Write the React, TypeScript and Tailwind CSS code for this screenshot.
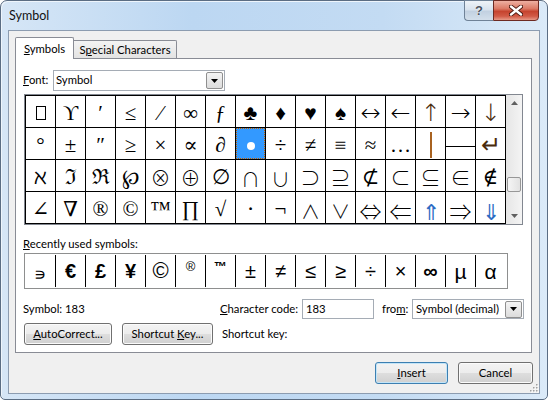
import React from 'react';

const rows: string[][] = [
  ['□', 'ϒ', '′', '≤', '⁄', '∞', 'ƒ', '♣', '♦', '♥', '♠', '↔', '←', '↑', '→', '↓'],
  ['°', '±', '″', '≥', '×', '∝', '∂', '•', '÷', '≠', '≡', '≈', '…', '|', '—', '↵'],
  ['ℵ', 'ℑ', 'ℜ', '℘', '⊗', '⊕', '∅', '∩', '∪', '⊃', '⊇', '⊄', '⊂', '⊆', '∈', '∉'],
  ['∠', '∇', '®', '©', '™', '∏', '√', '⋅', '¬', '∧', '∨', '⇔', '⇐', '⇑', '⇒', '⇓'],
];

const arrows = '↔←↑→↓↵';
const doubles = '⇔⇐⇑⇒⇓';
const thin = '⊗⊕⊃⊇⊂⊆∈';
const small = '∩∪∧∨';

const recent: { c: string; cls: string }[] = [
  { c: '∍', cls: "font-['Liberation_Serif','DejaVu_Serif',serif] text-[17px] pt-[6px]" },
  { c: '€', cls: 'text-[20px] font-bold' },
  { c: '£', cls: 'text-[20px] font-bold' },
  { c: '¥', cls: 'text-[20px] font-bold' },
  { c: '©', cls: 'text-[22px]' },
  { c: '®', cls: 'text-[13px] pb-[10px]' },
  { c: '™', cls: 'text-[13px] font-bold pb-[10px]' },
  { c: '±', cls: 'text-[20px]' },
  { c: '≠', cls: 'text-[20px]' },
  { c: '≤', cls: 'text-[20px]' },
  { c: '≥', cls: 'text-[20px]' },
  { c: '÷', cls: 'text-[20px]' },
  { c: '×', cls: 'text-[20px]' },
  { c: '∞', cls: 'text-[20px] font-bold' },
  { c: 'µ', cls: 'text-[21px]' },
  { c: 'α', cls: 'text-[21px]' },
];

function Arrow() {
  return (
    <svg width="7" height="4" viewBox="0 0 7 4">
      <path d="M0 0h7L3.5 4z" fill="#000" />
    </svg>
  );
}

function DropBtn() {
  return (
    <div className="mr-px ml-auto flex h-[17px] w-[17px] shrink-0 items-center justify-center rounded-[2px] border border-[#8f8f8f] bg-[linear-gradient(#f4f4f4,#dcdcdc)]">
      <Arrow />
    </div>
  );
}

function Glyph({ c }: { c: string }) {
  if (c === '□') return <span className="mt-[3px] h-[14px] w-[10px] border border-black" />;
  if (c === '|') return <span className="mt-[3px] h-[26px] w-[2px] bg-[#a86220]" />;
  if (c === '—') return <span className="mt-[6px] h-px w-full bg-black" />;
  let color = 'text-black';
  if (c === '↑' || c === '↓' || c === '↵') color = 'text-[#4a2c0c]';
  if (c === '⇑' || c === '⇓') color = 'text-[#2c6cc4]';
  if (arrows.includes(c))
    return (
      <span className={`${color} mt-[3px] font-['DejaVu_Sans',sans-serif] text-[24px] leading-none font-extralight`}>{c}</span>
    );
  if (doubles.includes(c))
    return (
      <span className={`${color} mt-[4px] font-['Noto_Sans_CJK_JP','DejaVu_Sans',sans-serif] text-[22px] leading-none font-light`}>
        {c}
      </span>
    );
  if (thin.includes(c))
    return (
      <span className="mt-[4px] font-['Noto_Sans_CJK_JP','DejaVu_Serif',serif] text-[20px] leading-none font-light">{c}</span>
    );
  if (small.includes(c))
    return (
      <span className="mt-[6px] font-['Noto_Sans_CJK_JP','DejaVu_Serif',serif] text-[19px] leading-none font-light">{c}</span>
    );
  return <span className={`${color} mt-[4px] leading-none`}>{c}</span>;
}

function Button({ label, w, focus }: { label: React.ReactNode; w: string; focus?: boolean }) {
  return (
    <div
      className={`${w} ${
        focus ? 'border-[#3c7fb1] shadow-[inset_0_0_0_1px_#c3e5f8]' : 'border-[#707070] shadow-[inset_0_0_0_1px_#fbfbfb]'
      } flex h-[22px] items-center justify-center rounded-[3px] border bg-[linear-gradient(#f3f3f3_0%,#ececec_50%,#dedede_50%,#d0d0d0_100%)] whitespace-nowrap`}
    >
      {label}
    </div>
  );
}

export default function App() {
  return (
    <div className="flex h-[400px] w-[548px] flex-col rounded-t-[7px] rounded-b-[5px] border border-[#5b6d83] bg-[linear-gradient(90deg,#d6e6f6_0%,#bcd7f2_35%,#c3dbf3_70%,#dbeaf8_100%)] px-[7px] pb-[5px] font-['Lato','Liberation_Sans',sans-serif] text-[11.3px] whitespace-nowrap text-black shadow-[inset_1px_1px_0_#eef5fc]">
      {/* title bar */}
      <div className="flex h-[29px]">
        <div className="pt-[7px] pl-px text-[12.5px] leading-[15px] text-[#111]">Symbol</div>
        <div className="-mt-px mr-px ml-auto flex h-[21px]">
          <div className="flex w-[29px] items-center justify-center rounded-bl-[4px] border border-r-0 border-[#6f8297] bg-[linear-gradient(#eef3f8_0%,#d9e3ee_45%,#c2d1e1_55%,#d3dfeb_100%)]">
            <span className="font-['Liberation_Sans',sans-serif] text-[13px] leading-none font-bold text-[#4a5360] [text-shadow:0_0_1px_#fff,0_0_1px_#fff]">?</span>
          </div>
          <div className="flex w-[46px] items-center justify-center rounded-br-[4px] border border-[#6d2a22] bg-[linear-gradient(#eeb0a2_0%,#dc7a66_40%,#c6442f_55%,#d25a46_80%,#e79a88_100%)]">
            <svg width="14" height="11" viewBox="0 0 14 11">
              <path d="M2 1.5l10 8M12 1.5l-10 8" stroke="#4a1810" strokeWidth="4.2" strokeLinecap="round" />
              <path d="M2 1.5l10 8M12 1.5l-10 8" stroke="#fff" strokeWidth="2.4" strokeLinecap="round" />
            </svg>
          </div>
        </div>
      </div>

      {/* client area */}
      <div className="relative flex flex-1 flex-col border border-[#8c9cb0] bg-[#f0f0f0] pt-[6px] pr-[7px] pl-[6px]">
        <div className="relative z-10 flex h-[21px] items-end">
          <div className="-mb-px flex h-[22px] w-[59px] justify-center rounded-t-[2px] border border-b-0 border-[#898c95] bg-white pt-[3px]">
            <span>
              <span className="underline">S</span>ymbols
            </span>
          </div>
          <div className="flex h-[18px] w-[103px] justify-center rounded-tr-[2px] border border-b-0 border-l-0 border-[#898c95] bg-[linear-gradient(#f3f3f3,#e3e3e3)] pt-[1px]">
            <span>
              S<span className="underline">p</span>ecial Characters
            </span>
          </div>
        </div>

        <div className="flex h-[295px] w-[517px] flex-col border border-[#898c95] bg-white">
          {/* font row */}
          <div className="mt-[11px] flex h-[21px] items-center pl-[7px]">
            <span className="w-[30px]">
              <span className="underline">F</span>ont:
            </span>
            <div className="flex h-[21px] w-[172px] items-center border border-[#a5acb5] bg-white pl-[2px]">
              <span>Symbol</span>
              <DropBtn />
            </div>
          </div>

          {/* symbol grid */}
          <div className="mt-[3px] ml-[8px] flex w-[499px] border border-[#828790]">
            <div className="grid grid-cols-[repeat(16,29px)] grid-rows-[repeat(4,31px)] gap-px bg-black p-px font-['Liberation_Serif','DejaVu_Serif',serif] text-[21px]">
              {rows.flatMap((r, ri) =>
                r.map((c, ci) =>
                  ri === 1 && ci === 7 ? (
                    <div key={`${ri}-${ci}`} className="flex items-center justify-center border border-dotted border-[#c06000] bg-[#3399ff]">
                      <span className="mt-[5px] h-[8px] w-[8px] rounded-full bg-white" />
                    </div>
                  ) : (
                    <div key={`${ri}-${ci}`} className="flex items-center justify-center bg-white">
                      <Glyph c={c} />
                    </div>
                  )
                )
              )}
            </div>
            <div className="flex w-[16px] flex-col items-center bg-[linear-gradient(90deg,#e6e6e6,#f4f4f4)]">
              <div className="flex h-[16px] items-center justify-center">
                <svg width="7" height="4" viewBox="0 0 7 4">
                  <path d="M0 4h7L3.5 0z" fill="#606060" />
                </svg>
              </div>
              <div className="mt-[66px] h-[15px] w-[14px] rounded-[2px] border border-[#979797] bg-[linear-gradient(90deg,#f5f5f5,#e2e2e2)]" />
              <div className="mt-auto flex h-[16px] items-center justify-center">
                <svg width="7" height="4" viewBox="0 0 7 4">
                  <path d="M0 0h7L3.5 4z" fill="#606060" />
                </svg>
              </div>
            </div>
          </div>

          {/* recently used */}
          <div className="mt-[12px] pl-[7px] leading-[14px]">
            <span className="underline">R</span>ecently used symbols:
          </div>
          <div className="mt-[2px] ml-[8px] flex h-[36px] w-[484px] border border-[#8e8f8f] bg-white py-px">
            {recent.map((r, i) => (
              <div
                key={i}
                className={`${i === 0 ? '' : 'border-l border-black'} ${r.cls} flex w-[30px] items-center justify-center font-['Liberation_Sans',sans-serif] leading-none`}
              >
                {r.c}
              </div>
            ))}
          </div>

          {/* code row */}
          <div className="mt-[10px] flex h-[20px] items-center pl-[7px]">
            <span className="w-[197px]">Symbol: 183</span>
            <span className="w-[82px]">
              <span className="underline">C</span>haracter code:
            </span>
            <div className="flex h-[20px] w-[72px] items-center border border-[#a5acb5] bg-white pl-[3px]">183</div>
            <span className="ml-[8px] w-[30px]">
              fro<span className="underline">m</span>:
            </span>
            <div className="flex h-[20px] w-[112px] items-center overflow-hidden border border-[#a5acb5] bg-white pl-[3px]">
              <span>Symbol (decimal)</span>
              <DropBtn />
            </div>
          </div>

          {/* shortcut row */}
          <div className="mt-[4px] flex h-[22px] items-center pl-[8px]">
            <Button
              w="w-[88px]"
              label={
                <span>
                  <span className="underline">A</span>utoCorrect...
                </span>
              }
            />
            <div className="ml-[10px]">
              <Button
                w="w-[91px]"
                label={
                  <span>
                    Shortcut <span className="underline">K</span>ey...
                  </span>
                }
              />
            </div>
            <span className="ml-[9px]">Shortcut key:</span>
          </div>
        </div>

        {/* dialog buttons */}
        <div className="mt-[9px] -mr-px flex justify-end gap-[10px]">
          <Button
            w="w-[73px]"
            focus
            label={
              <span>
                <span className="underline">I</span>nsert
              </span>
            }
          />
          <Button w="w-[75px]" label="Cancel" />
        </div>

        <svg className="absolute right-0 bottom-0" width="10" height="10" viewBox="0 0 10 10">
          {[
            [8, 2],
            [5, 5],
            [8, 5],
            [2, 8],
            [5, 8],
            [8, 8],
          ].map(([x, y], i) => (
            <g key={i}>
              <rect x={x} y={y} width="1.5" height="1.5" fill="#fff" />
              <rect x={x - 1} y={y - 1} width="1.5" height="1.5" fill="#a0a0a0" />
            </g>
          ))}
        </svg>
      </div>
    </div>
  );
}
